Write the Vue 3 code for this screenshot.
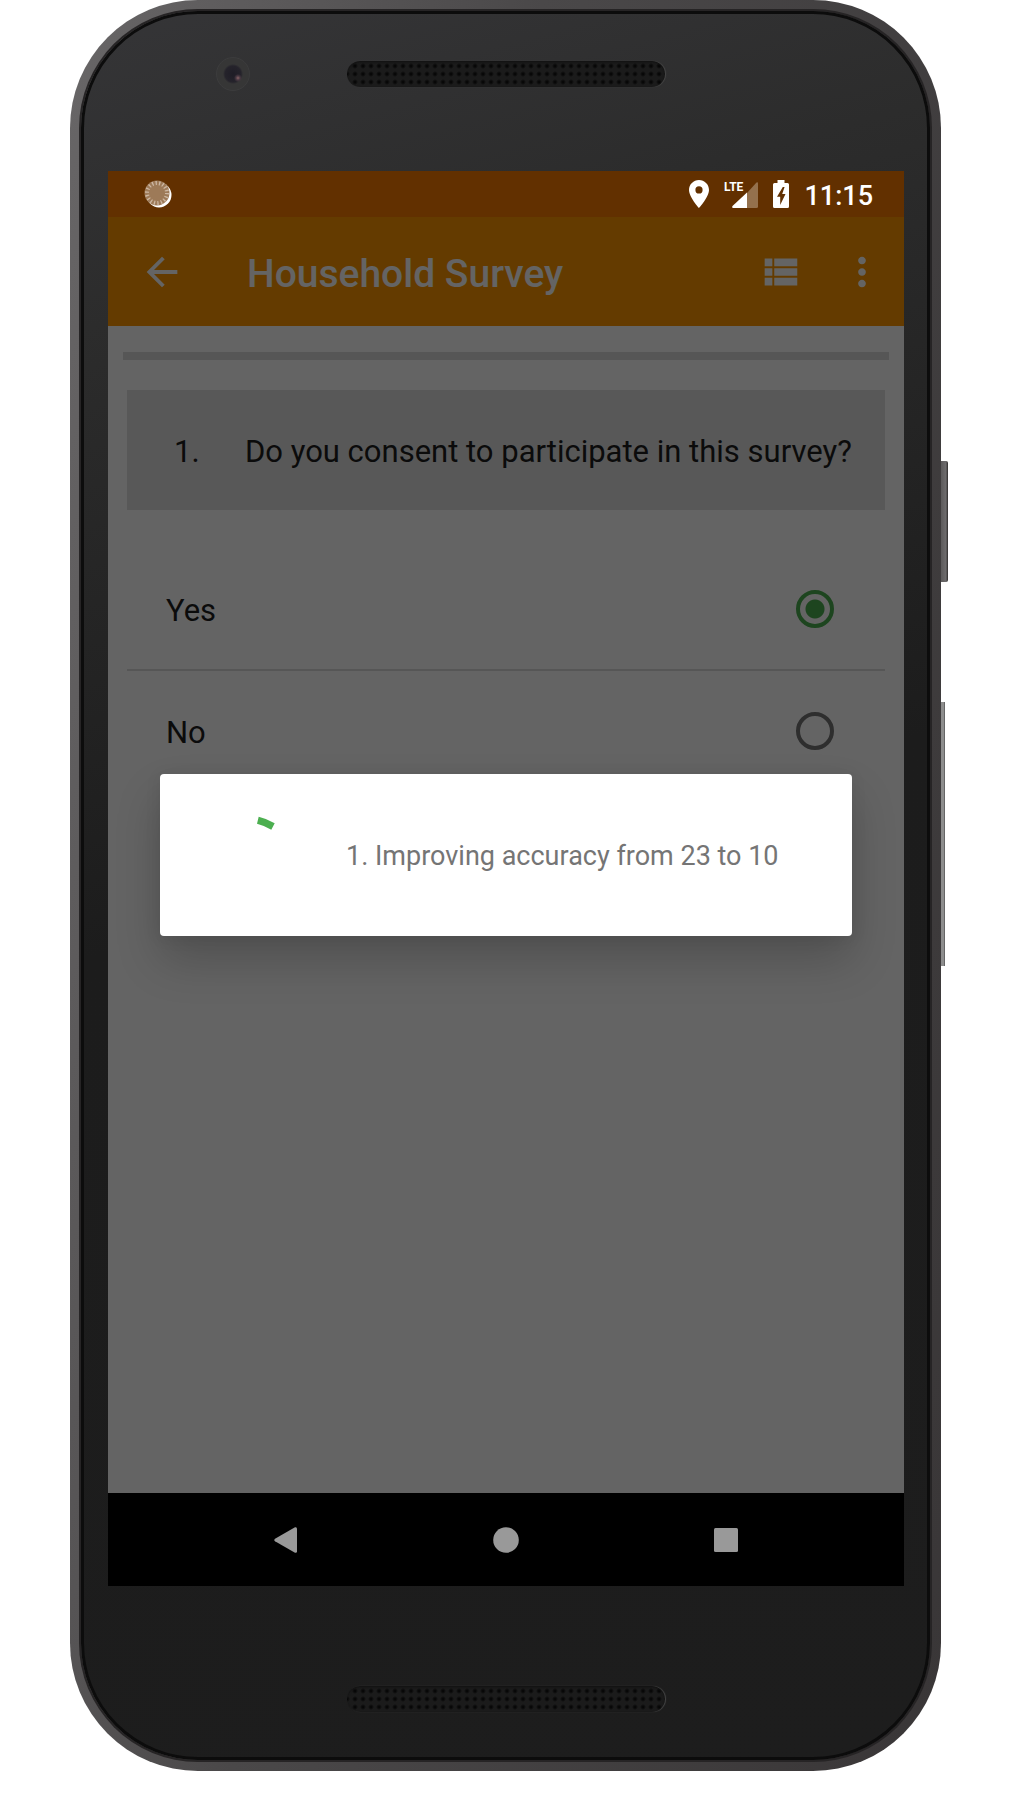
<!--
  Survey screen shown on a handset

  - status bar, app bar and system navigation
  - one question with radio options
  - progress dialog while the location fix improves
-->

<template>
  <main class="stage">
    <div class="phone">
      <span class="side-button power"></span>
      <span class="side-button volume"></span>

      <div class="face">
        <div class="bezel top">
          <span class="camera"></span>
          <span class="speaker"></span>
        </div>

        <div class="screen">
          <!-- Status bar -->
          <div class="status-bar">
            <svg class="sync" width="28" height="28" viewBox="0 0 28 28" aria-hidden="true">
              <circle cx="15" cy="15" r="12.5" fill="#fff" />
              <circle cx="13" cy="13" r="12.5" fill="#9d7a58" />
              <circle cx="13" cy="13" r="10" fill="none" stroke="#cdb8a4" stroke-width="4" stroke-dasharray="1.3 2.19" />
            </svg>
            <svg width="20" height="28" viewBox="0 0 20 28" aria-hidden="true">
              <path fill="#fff" fill-rule="evenodd" d="M10 0C4.500 0 0 4.400 0 9.900 0 17 10 28 10 28s10-11 10-18.100C20 4.400 15.500 0 10 0zm0 6.300a3.600 3.600 0 1 1 0 7.200 3.600 3.600 0 0 1 0-7.200z" />
            </svg>
            <svg width="34" height="28" viewBox="0 0 34 28" aria-hidden="true">
              <path fill="#94714d" d="M23 13L32.500 2.500Q34 1.500 34 3.500V26.500Q34 28 32.500 28H23z" />
              <path fill="#fff" d="M23 12.500V28H9Q7.300 27.500 8.500 26z" />
              <text class="lte" x="0" y="11">LTE</text>
            </svg>
            <svg width="16" height="28" viewBox="0 0 16 28" aria-hidden="true">
              <path fill="#fff" fill-rule="evenodd" d="M4.500 0h7v3H14.500Q16 3 16 4.500V26.500Q16 28 14.500 28H1.500Q0 28 0 26.500V4.500Q0 3 1.500 3H4.500zM9.800 7L4 16.800H7.200V25L12.500 14H9.200L11.600 7z" />
            </svg>
            <time class="clock">11:15</time>
          </div>

          <div class="app">
            <!-- App bar -->
            <header class="app-bar">
              <button type="button" class="icon-button" aria-label="Back">
                <svg viewBox="0 0 24 24"><path d="M20 11H7.830l5.590-5.590L12 4l-8 8 8 8 1.410-1.410L7.830 13H20v-2z" /></svg>
              </button>
              <h1 class="title">Household Survey</h1>
              <button type="button" class="icon-button" aria-label="Question list">
                <svg viewBox="0 0 24 24"><path d="M4 14h4v-4H4v4zm0 5h4v-4H4v4zM4 9h4V5H4v4zm5 5h12v-4H9v4zm0 5h12v-4H9v4zM9 5v4h12V5H9z" /></svg>
              </button>
              <button type="button" class="icon-button" aria-label="More options">
                <svg viewBox="0 0 24 24"><path d="M12 8c1.100 0 2-.9 2-2s-.9-2-2-2-2 .9-2 2 .9 2 2 2zm0 2c-1.100 0-2 .9-2 2s.9 2 2 2 2-.9 2-2-.9-2-2-2zm0 6c-1.100 0-2 .9-2 2s.9 2 2 2 2-.9 2-2-.9-2-2-2z" /></svg>
              </button>
            </header>

            <!-- Question -->
            <section class="content">
              <progress class="progress" value="0" max="100" aria-label="Survey progress"></progress>
              <h2 id="question" class="question">
                <span class="number">1.</span>
                <span>Do you consent to participate in this survey?</span>
              </h2>
              <div class="options" role="radiogroup" aria-labelledby="question">
                <label v-for="option in options" :key="option" class="option">
                  <span class="option-text">{{ option }}</span>
                  <input v-model="answer" type="radio" name="consent" :value="option" />
                </label>
              </div>
            </section>

            <!-- Progress dialog -->
            <div class="scrim">
              <div class="dialog" role="dialog" aria-labelledby="message">
                <svg class="spinner" width="96" height="96" viewBox="0 0 96 96" aria-hidden="true">
                  <path fill="#4caf50" d="M46.700 9.700Q55 11.600 62.700 16.300L59.300 22.700Q52.500 18.600 45 16.700z" />
                </svg>
                <p id="message" class="message">1. Improving accuracy from 23 to 10</p>
              </div>
            </div>
          </div>

          <!-- System navigation -->
          <nav class="nav-bar">
            <button type="button" aria-label="Back">
              <svg width="26" height="26" viewBox="0 0 26 26"><path d="M22 .3Q24 -.3 24 1.800V24.200Q24 26.300 22 25.700L2 14.300Q.5 13 2 11.700z" /></svg>
            </button>
            <button type="button" aria-label="Home">
              <svg width="26" height="26" viewBox="0 0 26 26"><circle cx="13" cy="13" r="12.800" /></svg>
            </button>
            <button type="button" aria-label="Recent apps">
              <svg width="26" height="26" viewBox="0 0 26 26"><rect x="1" y="1" width="24" height="24" rx="1.500" /></svg>
            </button>
          </nav>
        </div>

        <div class="bezel bottom">
          <span class="speaker"></span>
        </div>
      </div>
    </div>
  </main>
</template>

<script setup>
import { ref } from 'vue'

const options = ['Yes', 'No']
const answer = ref('Yes')
</script>

<style>
body {
  background: #fff;
}
</style>

<style scoped>
.stage,
.stage * {
  box-sizing: border-box;
}

.stage {
  padding: 0 83px 28px 70px;
  font-family: Roboto, "Liberation Sans", sans-serif;
}

button {
  padding: 0;
  border: 0;
  background: none;
}

svg {
  display: block;
}

/* Handset */
.phone {
  position: relative;
  padding: 11px;
  border-radius: 128px;
  background: linear-gradient(100deg, #686667 0%, #4a4849 40%, #393637 100%);
}

.face {
  padding: 0 23px 0 24px;
  border: 3px solid #0c0c0c;
  border-radius: 117px;
  background: linear-gradient(165deg, #353537 0%, #2c2c2c 16%, #1c1c1c 48%, #1d1d1d 100%);
  box-shadow: 0 0 0 2px #262425;
}

.side-button {
  position: absolute;
  left: 100%;
}

.power {
  top: 461px;
  width: 7px;
  height: 121px;
  border-radius: 0 2px 2px 0;
  background: linear-gradient(90deg, #5c5a5b, #6d6b6c 70%, #2b2929);
}

.volume {
  top: 702px;
  width: 4px;
  height: 264px;
  background: linear-gradient(90deg, #8d8d8d 70%, #4a4a4a);
}

.bezel {
  display: grid;
  grid-template-columns: 1fr 318px 1fr;
  align-items: start;
}

.top {
  height: 157px;
  padding-top: 43px;
}

.bottom {
  height: 171px;
  padding-top: 96px;
}

.camera {
  justify-self: end;
  width: 34px;
  height: 34px;
  margin-right: 97px;
  border: 1px solid #3c3c3d;
  border-radius: 50%;
  background: radial-gradient(circle at 21px 20px, #8a6365 0, #4b3a44 2px, transparent 4px),
    radial-gradient(circle, #1f1d26 0, #25232b 8px, #363636 10px, #363636 100%);
}

.speaker {
  grid-column: 2;
  height: 26px;
  margin-top: 4px;
  border-radius: 13px;
  background: radial-gradient(circle, #050505 0, #090909 1px, transparent 3px) 4px 1px / 8px 8px #1b1b1b;
  box-shadow: 1px 0 1px #484848, inset 0 1px 2px #111;
}

/* Screen */
.screen {
  display: flex;
  flex-direction: column;
  aspect-ratio: 796 / 1415;
  background: #000;
}

.status-bar {
  display: flex;
  align-items: center;
  gap: 15px;
  height: 46px;
  padding: 0 31px 0 36px;
  background: #623000;
}

.sync {
  margin-right: auto;
}

.lte {
  fill: #fff;
  font-family: "Liberation Sans Narrow", Roboto, sans-serif;
  font-size: 12px;
  font-weight: 700;
}

.clock {
  padding-top: 4px;
  color: #fff;
  font-size: 27px;
  font-weight: 500;
  line-height: 32px;
}

.app {
  position: relative;
  display: flex;
  flex: 1;
  flex-direction: column;
  background: #fff;
}

.app-bar {
  display: flex;
  align-items: center;
  height: 109px;
  padding: 0 19px 0 31px;
  background: #ff9800;
}

.icon-button {
  width: 46px;
  height: 46px;
}

.icon-button + .icon-button {
  margin-left: 36px;
}

.icon-button svg {
  width: 46px;
  height: 46px;
  fill: #fff;
}

.title {
  flex: 1;
  margin: 0 0 0 62px;
  padding-top: 4px;
  color: #fff;
  font-size: 39px;
  font-weight: 500;
  line-height: 46px;
}

.content {
  padding: 26px 15px;
}

.progress {
  display: block;
  width: 100%;
  height: 8px;
  border: 0;
  background: #dbdbdb;
  appearance: none;
}

.progress::-webkit-progress-bar {
  background: #dbdbdb;
}

.question {
  display: flex;
  align-items: center;
  height: 120px;
  margin: 30px 4px 38px;
  padding: 4px 30px 0 47px;
  background: #e0e0e0;
  color: #1c1c1c;
  font-size: 31px;
  font-weight: 400;
  line-height: 36px;
  white-space: nowrap;
}

.number {
  width: 71px;
}

.options {
  margin: 0 4px;
}

.option {
  display: flex;
  align-items: center;
  justify-content: space-between;
  height: 121px;
  padding: 0 51px 0 39px;
  color: #1c1c1c;
  font-size: 31px;
  line-height: 36px;
}

.option + .option {
  height: 122px;
  border-top: 2px solid #dbdbdb;
}

.option-text {
  padding-top: 4px;
}

.option input {
  width: 38px;
  height: 38px;
  margin: 0;
  border: 4px solid #757575;
  border-radius: 50%;
  appearance: none;
}

.option input:checked {
  border-color: #4caf50;
  background: radial-gradient(circle, #4caf50 9px, transparent 10px);
}

.scrim {
  position: absolute;
  inset: 0;
  display: flex;
  flex-direction: column;
  justify-content: center;
  padding: 0 52px;
  background: rgba(0, 0, 0, 0.608);
}

.dialog {
  display: flex;
  align-items: center;
  gap: 38px;
  padding: 33px 52px;
  border-radius: 4px;
  background: #fff;
  box-shadow: 0 24px 46px rgba(0, 0, 0, 0.2), 0 2px 16px rgba(0, 0, 0, 0.08);
}

.message {
  margin: 0;
  padding-top: 2px;
  color: #757575;
  font-size: 27px;
  line-height: 32px;
}

.nav-bar {
  display: flex;
  justify-content: center;
  height: 93px;
  background: #000;
}

.nav-bar button {
  display: grid;
  place-items: center;
  width: 220px;
}

.nav-bar svg {
  fill: #999;
}
</style>
